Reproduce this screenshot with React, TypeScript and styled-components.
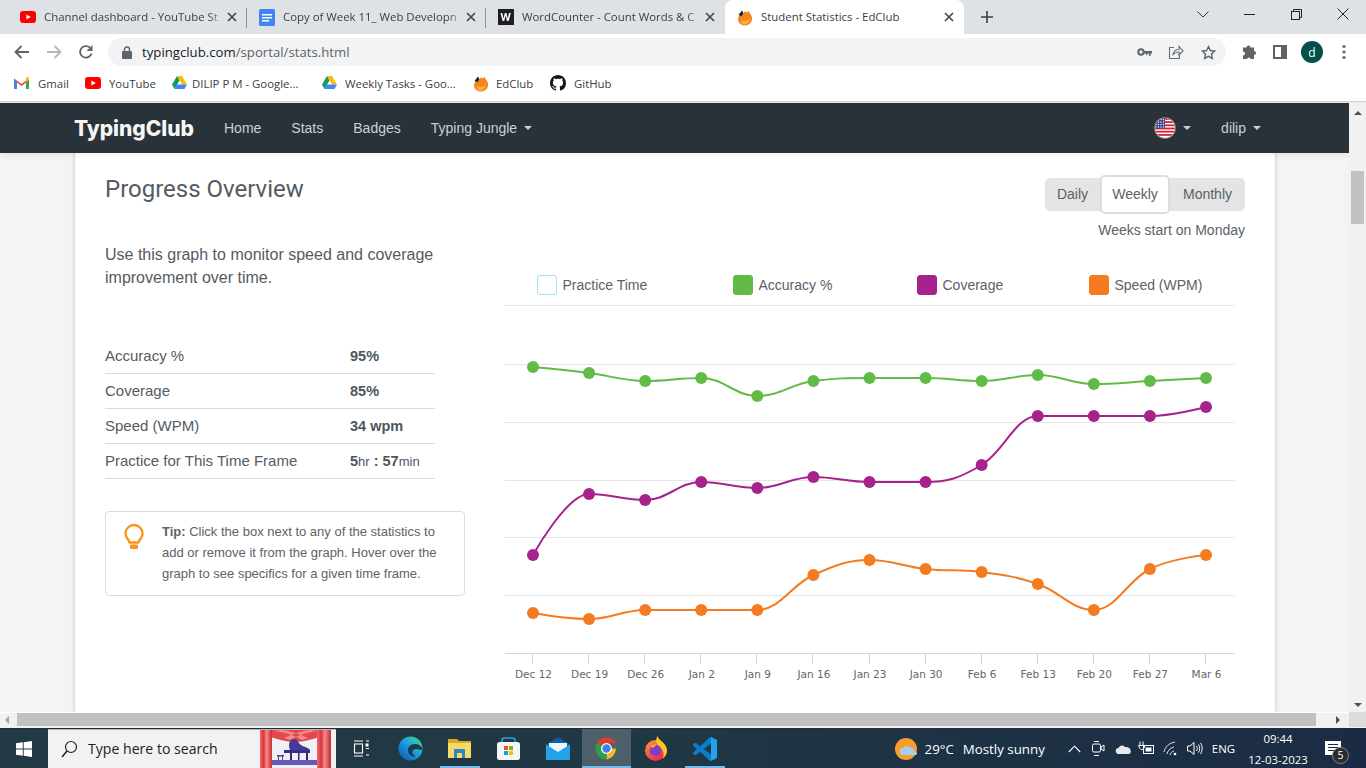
import React from 'react';
import styled, { createGlobalStyle } from 'styled-components';

const Global = createGlobalStyle`
  html, body { margin: 0; padding: 0; width: 1366px; height: 768px; overflow: hidden; background: #fff; }
  * { box-sizing: border-box; }
  #root { width: 1366px; height: 768px; }
`;

const ui = `"Open Sans", "Noto Sans", sans-serif`;
const web = `"Liberation Sans", Arial, sans-serif`;

const Screen = styled.div`
  width: 1366px; height: 768px; display: flex; flex-direction: column; overflow: hidden; font-family: ${web};
`;

/* ---------- browser chrome ---------- */
const TabStrip = styled.div`
  height: 34px; background: #dee1e6; display: flex; align-items: flex-end; padding-left: 8px; flex: none;
`;
const Tab = styled.div<{ $active?: boolean; $divider?: boolean }>`
  width: 239px; height: 34px; display: flex; align-items: center; padding: 0 10px 0 12px;
  background: ${p => (p.$active ? '#fff' : 'transparent')};
  border-radius: ${p => (p.$active ? '8px 8px 0 0' : '0')};
  position: relative;
  &::after {
    content: ''; position: absolute; right: 0; top: 8px; height: 20px; width: 1px;
    background: ${p => (p.$divider ? '#8d9096' : 'transparent')};
  }
`;
const TabFavicon = styled.span`
  width: 16px; height: 17px; display: flex; align-items: center; justify-content: center; flex: none;
`;
const TabTitle = styled.span`
  font: 11.4px ${ui}; color: #3c4043; margin-left: 8px; flex: 1; white-space: nowrap; padding-bottom: 2px;
  -webkit-mask-image: linear-gradient(90deg, #000 90%, transparent 99%);
  mask-image: linear-gradient(90deg, #000 90%, transparent 99%);
`;
const TabTitleActive = styled(TabTitle)`
  -webkit-mask-image: none; mask-image: none;
`;
const NewTab = styled.div`
  width: 24px; height: 34px; margin-left: 11px; display: flex; align-items: center; justify-content: center;
`;
const WindowControls = styled.div`
  margin-left: auto; display: flex; height: 34px; align-items: center;
`;
const WinCtl = styled.div`
  width: 46.5px; height: 34px; display: flex; align-items: center; justify-content: center; padding-bottom: 6px;
`;
const Toolbar = styled.div`
  height: 34px; background: #fff; display: flex; align-items: center; flex: none; padding: 2px 0 0 6px;
`;
const ToolBtn = styled.div`
  width: 32px; height: 28px; display: flex; align-items: center; justify-content: center; flex: none;
`;
const Omnibox = styled.div`
  margin: 0 6px; width: 1118px; height: 28px; background: #f1f3f4; border-radius: 14px; display: flex; align-items: center;
  padding: 0 2px 0 14px;
`;
const Url = styled.span`
  font: 13.2px ${ui}; color: #5f6368; margin-left: 10px; flex: 1;
  b { font-weight: 400; color: #202124; }
`;
const ProfileDot = styled.div`
  width: 22px; height: 22px; border-radius: 50%; background: #02504a; color: #fff; font: 12px ${ui};
  display: flex; align-items: center; justify-content: center;
`;
const Bookmarks = styled.div`
  height: 32px; background: #fff; display: flex; align-items: center; padding: 0 0 2px 14px; flex: none;
`;
const Bookmark = styled.div<{ $w: number }>`
  width: ${p => p.$w}px; display: flex; align-items: center; font: 11.4px ${ui}; color: #3c4043; white-space: nowrap; flex: none;
`;
const MarkIcon = styled.span<{ $w: number }>`
  width: ${p => p.$w}px; display: flex; align-items: center; flex: none;
`;
const ChromeEdge = styled.div`
  height: 3px; flex: none; background: linear-gradient(#fff 0 1px, #d0d2d4 1px 2px, #e6e6e6 2px);
`;

/* ---------- page ---------- */
const Viewport = styled.div`
  flex: 1; display: flex; min-height: 0;
`;
const Page = styled.div`
  flex: 1; display: flex; flex-direction: column; min-width: 0; background: #f4f4f4; overflow: hidden;
`;
const NavBar = styled.nav`
  height: 50px; flex: none; background: #2a3239; display: flex; align-items: center; padding: 0 88px 0 74px;
  color: #ccd0d3; font: 14px ${web}; position: relative; z-index: 2;
  box-shadow: 0 2px 6px rgba(0,0,0,.08);
`;
const Brand = styled.div`
  font: 800 21px Inter, "Open Sans", sans-serif; color: #f4f5f5; letter-spacing: -.05px; margin-right: 30px; width: 120px; white-space: nowrap;
`;
const NavLink = styled.div`
  display: flex; align-items: center; margin-right: 30px; white-space: nowrap;
`;
const NavUser = styled(NavLink)`
  margin-right: 0;
`;
const Caret = styled.i`
  display: inline-block; width: 0; height: 0; border-left: 4px solid transparent; border-right: 4px solid transparent;
  border-top: 4px solid currentColor; margin-left: 7px;
`;
const NavRight = styled.div`
  margin-left: auto; display: flex; align-items: center;
`;
const Lang = styled.div`
  display: flex; align-items: center; margin-right: 30px;
`;
const Card = styled.main`
  margin-left: 74px; width: 1202px; flex: 1; background: #fff; padding: 22px 30px 0 30px;
  border-left: 1px solid #ddd; border-right: 1px solid #ddd; box-shadow: 0 0 4px rgba(0,0,0,.12); overflow: hidden;
`;
const Header = styled.div`
  display: flex; justify-content: space-between; align-items: flex-start; height: 68px;
`;
const Title = styled.h1`
  margin: 0; font: 400 24px/28px Roboto, sans-serif; color: #555b60;
`;
const ToggleWrap = styled.div`
  display: flex; flex-direction: column; align-items: flex-end;
`;
const Toggle = styled.div`
  margin-top: 3px; height: 33px; width: 200px; background: #e4e4e4; border-radius: 5px; display: flex; align-items: center;
`;
const ToggleItem = styled.div<{ $active?: boolean; $w: number }>`
  width: ${p => p.$w}px; text-align: center; font: 14px ${web}; color: #5a6268;
  ${p => p.$active ? 'height: 39px; line-height: 35px; background: #fff; border: 2px solid #ddd; border-radius: 5px;' : 'line-height: 33px;'}
`;
const WeekNote = styled.div`
  font: 14px/17px ${web}; color: #5a6268; margin-top: 11px;
`;
const Body = styled.div`
  display: grid; grid-template-columns: 360px 740px; column-gap: 40px;
`;
const Intro = styled.p`
  margin: 0; font: 16px/23px ${web}; color: #555b60; width: 340px;
`;
const Stats = styled.div`
  width: 330px; margin-top: 50px;
`;
const StatRow = styled.div`
  height: 35px; display: flex; align-items: center; border-bottom: 1px solid #d9dde2; font: 15px ${web}; color: #555b60; padding-bottom: 1px;
`;
const StatName = styled.span`
  width: 245px;
`;
const StatValue = styled.span`
  font: 14.5px ${web}; color: #50565b;
  b { font-weight: 700; }
  small { font-size: 13px; }
`;
const TipBox = styled.div`
  margin-top: 32px; width: 360px; height: 85px; border: 1px solid #dcdcdc; border-radius: 4px; display: flex; padding: 9px 20px 0 18px;
`;
const TipIcon = styled.div`
  width: 38px; flex: none; padding-top: 3px;
`;
const TipText = styled.p`
  margin: 0; font: 13px/21px ${web}; color: #5d6368; white-space: nowrap;
  b { font-weight: 700; }
`;
const Legend = styled.div`
  height: 40px; margin-top: 22px; display: flex; align-items: center; font: 14px ${web}; color: #5a6268;
`;
const LegendItem = styled.div<{ $w: number; $first?: boolean }>`
  width: ${p => p.$w}px; display: flex; align-items: center; white-space: nowrap;
  ${p => (p.$first ? 'margin-left: 32px;' : '')}
`;
const Swatch = styled.span<{ $c: string; $empty?: boolean }>`
  width: 20px; height: 20px; border-radius: 3px; margin-right: 5.5px; flex: none;
  background: ${p => (p.$empty ? '#fff' : p.$c)}; border: 1px solid ${p => p.$c};
`;
const ChartSvg = styled.svg`
  display: block;
`;

/* ---------- scrollbars ---------- */
const VScroll = styled.div`
  width: 17px; flex: none; background: #f1f1f1; display: flex; flex-direction: column; align-items: center;
`;
const Arrow = styled.div<{ $dir: 'up' | 'down' | 'left' | 'right'; $c?: string }>`
  width: 0; height: 0; border: 4px solid transparent; flex: none;
  border-${p => ({ up: 'bottom', down: 'top', left: 'right', right: 'left' }[p.$dir])}-color: ${p => p.$c || '#505050'};
`;
const UpArrow = styled(Arrow)`margin-top: 4px;`;
const DownArrow = styled(Arrow)`margin-top: auto; margin-bottom: 1px;`;
const VThumb = styled.div`
  width: 13px; height: 53px; background: #c1c1c1; margin-top: 56px;
`;
const HScroll = styled.div`
  height: 16px; flex: none; background: #f1f1f1; display: flex; align-items: center; padding-bottom: 2px; border-top: 1px solid #fff;
`;
const HThumb = styled.div`
  width: 1299px; height: 13px; background: #c1c1c1; margin: 0 0 0 8px;
`;
const HLeft = styled(Arrow)`margin-left: 1px; border-right-color: #a0a0a0;`;
const HRight = styled(Arrow)`margin-left: 20px;`;
const HCorner = styled.div`
  width: 17px; height: 15px; margin-left: auto; background: #dcdcdc;
`;

/* ---------- taskbar ---------- */
const Taskbar = styled.div`
  height: 40px; flex: none; display: flex; align-items: center; color: #fff;
  background: linear-gradient(90deg, #213a44 0%, #203844 45%, #1b2b45 100%);
  border-top: 1px solid #1c2f3a;
`;
const StartBtn = styled.div`
  width: 48px; height: 40px; display: flex; align-items: center; justify-content: center;
`;
const SearchBox = styled.div`
  width: 288px; height: 40px; background: #f2f2f2; border: 1px solid #b6b6b6; border-width: 1px 0; display: flex; align-items: center; padding: 0 5px 0 13px;
  color: #222; font: 14.1px ${ui}; overflow: hidden;
`;
const SearchLabel = styled.span`
  margin-left: 10px; flex: 1; white-space: nowrap;
`;
const TaskCell = styled.div<{ $active?: boolean; $w?: number }>`
  width: ${p => p.$w || 49}px; height: 39px; display: flex; align-items: center; justify-content: center; flex: none; position: relative;
  background: ${p => (p.$active ? '#4d5f68' : 'transparent')};
`;
const OpenMark = styled.span<{ $wide?: boolean }>`
  position: absolute; bottom: 0; height: 2px; background: #76b9ed; left: ${p => (p.$wide ? '0' : '5px')}; right: ${p => (p.$wide ? '0' : '4px')};
`;
const Tray = styled.div`
  margin-left: auto; display: flex; align-items: center; height: 40px; font: 13.3px ${ui};
`;
const Weather = styled.div`
  display: flex; align-items: center; gap: 8px; margin-right: 21px; white-space: nowrap;
`;
const WeatherLabel = styled.span`
  margin-left: 1px;
`;
const TrayIcons = styled.div`
  display: flex; align-items: center; gap: 6px; margin-right: 8px;
`;
const TrayIcon = styled.div`
  width: 18px; display: flex; justify-content: center;
`;
const TrayText = styled.span`
  font: 11.4px ${ui}; margin-right: 13px;
`;
const Clock = styled.div`
  text-align: center; font: 11.4px/21px ${ui}; width: 60px;
`;
const Notify = styled.div`
  width: 58px; display: flex; justify-content: center; position: relative; height: 40px; padding: 12px 8px 0 0;
`;
const Badge = styled.span`
  position: absolute; left: 24px; top: 18px; width: 17px; height: 17px; border-radius: 50%; background: #2b2b2b; border: 1px solid #888;
  font: 10.5px/15px ${ui}; text-align: center; color: #fff;
`;

/* ---------- icons ---------- */
const YT = () => (
  <svg width="16" height="16" viewBox="0 0 16 16"><rect y="2" width="16" height="12" rx="3" fill="#f00" /><path d="M6.4 5.4 10.8 8l-4.4 2.6z" fill="#fff" /></svg>
);
const Docs = () => (
  <svg width="16" height="17" viewBox="0 0 16 17"><rect width="16" height="17" rx="1.500" fill="#4285f4" /><path d="M3 5h10v1.500H3zM3 8h10v1.500H3zM3 11h7v1.500H3z" fill="#fff" /></svg>
);
const WIcon = () => (
  <svg width="16" height="16" viewBox="0 0 16 16"><rect width="16" height="16" fill="#1f1f1f" /><path d="M2.500 4h1.800l1.100 5.600L6.900 4h1.500l1.400 5.600L11 4h1.800l-2.100 8H9L7.600 6.600 6.200 12H4.600z" fill="#fff" /></svg>
);
const Ed = () => (
  <svg width="16" height="17" viewBox="0 0 16 17"><path d="M8 2c1 2 2.500 1.500 4-.8-.2 1.500.2 2.300 1 3.300 1.600 2 2.400 3.800 2 6-.5 3.600-3.400 6-7 6-3.800 0-7-2.600-7-6.300 0-1.500.5-2.800 1.500-3.800C3.600 7.500 6 6 8 2z" fill="#f5861f" /><path d="M1.500 6 5 1.500l1.500 2.800-2 3z" fill="#222" /><path d="M4 11c2.500 1.800 6.500 1.500 9-2-.6 4-3 6.500-5.500 6.500S4 13.500 4 11z" fill="#fbb040" /></svg>
);
const Drive = () => (
  <svg width="15" height="14" viewBox="0 0 15 14"><path d="M5 0h5l5 8.600h-5z" fill="#fbbc04" /><path d="M5 0 0 8.600 2.500 13l5-8.500z" fill="#0f9d58" /><path d="M5 8.600h10L12.500 13h-10z" fill="#4285f4" /></svg>
);
const Gmail = () => (
  <svg width="15" height="12" viewBox="0 0 15 12"><path d="M0 1.500 7.500 7 15 1.500V11a1 1 0 0 1-1 1h-2V5.500L7.500 9 3 5.500V12H1a1 1 0 0 1-1-1z" fill="#ea4335" /><path d="M0 3v8a1 1 0 0 0 1 1h2V5z" fill="#4285f4" /><path d="M12 5v7h2a1 1 0 0 0 1-1V3z" fill="#34a853" /><path d="M12 1v4l3-2V1.500C15 .3 13.500-.3 12.700.3z" fill="#fbbc04" /></svg>
);
const Github = () => (
  <svg width="16" height="16" viewBox="0 0 16 16"><path fill="#181717" d="M8 0C3.580 0 0 3.580 0 8c0 3.540 2.290 6.530 5.470 7.590.4.070.55-.17.55-.38 0-.19-.01-.82-.01-1.490-2.010.37-2.530-.49-2.690-.94-.09-.23-.48-.94-.82-1.130-.28-.15-.68-.52-.01-.53.63-.01 1.080.58 1.230.82.720 1.210 1.870.870 2.330.660.070-.520.280-.870.510-1.070-1.780-.2-3.640-.89-3.640-3.950 0-.87.310-1.590.820-2.150-.08-.2-.36-1.020.08-2.120 0 0 .67-.21 2.200.820.640-.18 1.320-.27 2-.27s1.360.09 2 .27c1.530-1.040 2.200-.82 2.200-.82.440 1.100.160 1.920.080 2.120.510.560.820 1.270.820 2.150 0 3.070-1.870 3.750-3.650 3.950.290.250.540.730.540 1.480 0 1.070-.01 1.930-.01 2.200 0 .210.150.460.550.380A8.010 8.010 0 0 0 16 8c0-4.420-3.580-8-8-8z" /></svg>
);
const CloseX = () => (
  <svg width="10" height="10" viewBox="0 0 10 10"><path d="M1 1l8 8M9 1l-8 8" stroke="#45484c" strokeWidth="1.700" /></svg>
);
const Plus = () => (
  <svg width="12" height="12" viewBox="0 0 12 12"><path d="M6 0v12M0 6h12" stroke="#3c4043" strokeWidth="1.600" /></svg>
);
const Back = () => (
  <svg width="16" height="14" viewBox="0 0 16 14"><path d="M15 7H2M7.500 1 1.500 7l6 6" fill="none" stroke="#5f6368" strokeWidth="1.800" /></svg>
);
const Fwd = () => (
  <svg width="16" height="14" viewBox="0 0 16 14"><path d="M1 7h13M8.500 1l6 6-6 6" fill="none" stroke="#b4b6b9" strokeWidth="1.800" /></svg>
);
const Reload = () => (
  <svg width="16" height="16" viewBox="0 0 16 16"><path d="M13.500 9.500A5.800 5.800 0 1 1 12 3.700" fill="none" stroke="#5f6368" strokeWidth="1.800" /><path d="M14.500 1v6h-6z" fill="#5f6368" /></svg>
);
const Lock = () => (
  <svg width="10" height="13" viewBox="0 0 10 13"><path d="M2.500 5V3.500a2.500 2.500 0 0 1 5 0V5" fill="none" stroke="#5f6368" strokeWidth="1.400" /><rect y="5" width="10" height="8" rx="1" fill="#5f6368" /></svg>
);
const KeyIcon = () => (
  <svg width="15" height="9" viewBox="0 0 15 9"><circle cx="4" cy="4" r="2.700" fill="none" stroke="#5f6368" strokeWidth="2" /><path d="M7 3h8v2.500h-1.500V8H12V5.500h-1.500V7H9V5.500H7z" fill="#5f6368" /></svg>
);
const ShareIcon = () => (
  <svg width="16" height="16" viewBox="0 0 16 16" fill="none" stroke="#6a6e72" strokeWidth="1.100"><path d="M6 3.500H1.500v11h10V10" /><path d="M5 10.500c.5-3 3-5 6-5V2.500l4 4.500-4 4V8c-2.500 0-4.500 1-6 2.500z" /></svg>
);
const StarIcon = () => (
  <svg width="15" height="15" viewBox="0 0 24 24" fill="none" stroke="#5f6368" strokeWidth="2.200"><path d="m12 2.500 3 6.300 6.900.9-5 4.800 1.200 6.900-6.100-3.300-6.100 3.300 1.200-6.900-5-4.800 6.900-.9z" /></svg>
);
const Puzzle = () => (
  <svg width="15" height="15" viewBox="0 0 15 15"><path d="M5.500 2.500a2 2 0 0 1 4 0H13v3.500a2 2 0 0 1 0 4V14H9.800a2 2 0 0 0-3.900 0H2v-3.500a2 2 0 0 0 0-4V2.500z" fill="#5f6368" /></svg>
);
const SidePanel = () => (
  <svg width="14" height="14" viewBox="0 0 14 14"><rect x="1" y="1" width="12" height="12" fill="none" stroke="#5f6368" strokeWidth="2" /><rect x="8" y="1" width="5" height="12" fill="#5f6368" /></svg>
);
const Dots = () => (
  <svg width="4" height="16" viewBox="0 0 4 16"><circle cx="2" cy="2.500" r="1.600" fill="#5f6368" /><circle cx="2" cy="8" r="1.600" fill="#5f6368" /><circle cx="2" cy="13.500" r="1.600" fill="#5f6368" /></svg>
);
const Flag = () => (
  <svg width="22" height="22" viewBox="0 0 22 22">
    <defs><clipPath id="fc"><circle cx="11" cy="11" r="10" /></clipPath></defs>
    <circle cx="11" cy="11" r="10.800" fill="#8a8f96" />
    <g clipPath="url(#fc)">
      <rect width="22" height="22" fill="#fff" />
      {[1, 4.2, 7.4, 10.6, 13.8, 17].map(y => <rect key={y} y={y} width="22" height="1.800" fill="#d8232f" />)}
      <rect width="11" height="11.500" fill="#3b3f8f" />
      {[2.5, 5, 7.5, 10].map(y => [2, 4.5, 7, 9.5].map(x => <circle key={`${x}-${y}`} cx={x} cy={y} r=".7" fill="#fff" />))}
    </g>
  </svg>
);
const Bulb = () => (
  <svg width="20" height="27" viewBox="0 0 20 27"><path d="M5.500 18.500c-.3-2-1.400-3.300-2.600-4.800A8.300 8.300 0 0 1 1.500 9.500a8.500 8.500 0 0 1 17 0c0 1.600-.4 3-1.400 4.200-1.200 1.500-2.300 2.800-2.600 4.800z" fill="none" stroke="#f7941d" strokeWidth="2.400" strokeLinejoin="round" /><rect x="6" y="20.500" width="8" height="4.500" rx="1" fill="#f7941d" /></svg>
);
const WinLogo = () => (
  <svg width="16" height="16" viewBox="0 0 16 16"><path fill="#fff" d="M0 2.300 6.800 1.300v6.300H0zM7.700 1.200 16 0v7.600H7.700zM0 8.400h6.800v6.300L0 13.700zM7.700 8.400H16V16l-8.300-1.200z" /></svg>
);
const SearchGlass = () => (
  <svg width="17" height="18" viewBox="0 0 17 18"><circle cx="10" cy="7" r="5.500" fill="none" stroke="#222" strokeWidth="1.200" /><path d="M6 11 1 17" stroke="#222" strokeWidth="1.500" /></svg>
);
const Piano = () => (
  <svg width="71" height="38" viewBox="0 0 71 38" style={{ flex: 'none' }}>
    <defs>
      <linearGradient id="cur" x1="0" x2="1" y1="0" y2="0">
        <stop offset="0" stopColor="#f0686a" /><stop offset=".3" stopColor="#d8383c" /><stop offset=".55" stopColor="#f58a8a" /><stop offset="1" stopColor="#c72a30" />
      </linearGradient>
    </defs>
    <rect width="71" height="38" fill="#f1f0f5" />
    <path d="M10 0h50v7c-8 2-16 5-25 5S18 9 10 7z" fill="#e2484c" />
    <path d="M14 1c10 1 20 4 28 9l6-2C40 4 30 1 22 0zM58 1c-10 1-20 4-28 9l-6-2c8-4 18-7 26-8z" fill="#f58a8a" />
    <rect x="12" y="30" width="46" height="5" fill="#6c58b4" />
    <path d="M30 20c-2-5-1-11 4-11 4 0 4 4 7 6 3 2 7 2 9 5z" fill="#463a96" />
    <rect x="24" y="20" width="26" height="3" fill="#3a2e86" />
    <path d="M30 23h2v7h-2zM46 23h2v7h-2zM38 23h1.500v7H38z" fill="#32287a" />
    <rect x="17" y="25" width="7" height="1.500" fill="#4f3f9a" />
    <rect x="18" y="26" width="1" height="4" fill="#4f3f9a" /><rect x="22" y="26" width="1" height="4" fill="#4f3f9a" />
    <rect x="0" width="12" height="38" fill="url(#cur)" />
    <rect x="57" width="14" height="38" fill="url(#cur)" />
  </svg>
);
const TaskView = () => (
  <svg width="17" height="17" viewBox="0 0 17 17" fill="none" stroke="#fff" strokeWidth="1.100"><path d="M1 1h9M1 16h9" /><rect x="1.500" y="4" width="8" height="9" /><path d="M13 8.500h3M13 15h3M13 1h3" /><rect x="12.500" y="3.500" width="3" height="3" fill="#fff" stroke="none" /></svg>
);
const Edge = () => (
  <svg width="25" height="25" viewBox="0 0 25 25">
    <defs>
      <linearGradient id="eg" x1="0" y1="1" x2=".9" y2="0"><stop offset="0" stopColor="#0b52a8" /><stop offset=".55" stopColor="#1b9de2" /><stop offset="1" stopColor="#47d68b" /></linearGradient>
    </defs>
    <circle cx="12.500" cy="12.500" r="12" fill="url(#eg)" />
    <path d="M24.500 14c-.2-3.500-3.500-6-7.500-6-4.500 0-7.500 3-7 7 .5 3.800 4 6.300 8 5.500-2.200-.7-3.800-2.500-3.600-4.500.2-1.800 1.700-3 3.600-3 2.200 0 3.800 1 6.500 1z" fill="#1e3a48" />
  </svg>
);
const Folder = () => (
  <svg width="23" height="19" viewBox="0 0 23 19"><path d="M0 0h9l2 2h12v17H0z" fill="#e0a526" /><path d="M0 4h23v15H0z" fill="#f7d967" /><path d="M6 10h11v9h-3v-5H9v5H6z" fill="#2e86c9" /></svg>
);
const Store = () => (
  <svg width="23" height="23" viewBox="0 0 23 23"><path d="M5 7V3.500C5 1.500 6 1 7.500 1h8c1.500 0 2.500.5 2.500 2.500V7" fill="none" stroke="#2aa0da" strokeWidth="1.700" /><rect y="5" width="23" height="18" rx="2.500" fill="#f5f5f5" /><rect x="7" y="9" width="4" height="4" fill="#f25022" /><rect x="12" y="9" width="4" height="4" fill="#7fba00" /><rect x="7" y="14" width="4" height="4" fill="#00a4ef" /><rect x="12" y="14" width="4" height="4" fill="#ffb900" /></svg>
);
const Mail = () => (
  <svg width="24" height="23" viewBox="0 0 24 23"><path d="M12 0 24 7.500V23H0V7.500z" fill="#0d5fa8" /><path d="M3 6h18v9H3z" fill="#eef6fb" /><path d="M0 7.500 12 15 24 7.500V23H0z" fill="#23a2e6" /></svg>
);
const ChromeIcon = () => (
  <svg width="25" height="25" viewBox="0 0 48 48">
    <path d="M24 24 5.800 13.500A21 21 0 0 1 42.200 13.500H24z" fill="#e33b2e" />
    <path d="M24 24H42.200A21 21 0 0 1 24 45z" fill="#f3be2a" />
    <path d="M24 24 24 45A21 21 0 0 1 5.800 13.500z" fill="#2f9e4a" />
    <circle cx="24" cy="24" r="10.500" fill="#fff" /><circle cx="24" cy="24" r="8" fill="#3f7fe8" />
  </svg>
);
const Firefox = () => (
  <svg width="23" height="25" viewBox="0 0 24 26">
    <defs><linearGradient id="ff" x1="0" x2=".6" y1="0" y2="1"><stop offset="0" stopColor="#ff9a2a" /><stop offset="1" stopColor="#f0295c" /></linearGradient></defs>
    <circle cx="12" cy="15" r="11" fill="url(#ff)" />
    <path d="M14 0c1 3 3 4 5 6 3 2.500 5 5.500 5 9 0 4-2 7-5 9 2-3 2-7 0-10-2-2.500-5-3.500-6-7-.4-2-.2-5 1-7z" fill="#ffc626" />
    <circle cx="12" cy="15" r="6" fill="#7b3fc0" />
    <path d="M7 11c1.500-2 4-2.500 6-2l-3 3c-1.500.5-2.500 0-3-1z" fill="#ffb21f" />
  </svg>
);
const VSCode = () => (
  <svg width="24" height="24" viewBox="0 0 24 24"><path fill="#0a7ccb" d="M23.150 2.587 18.210.21a1.494 1.494 0 0 0-1.705.29l-9.460 8.630-4.120-3.128a.999.999 0 0 0-1.276.057L.327 7.261A1 1 0 0 0 .326 8.740L3.899 12 .326 15.260a1 1 0 0 0 .001 1.479L1.650 17.940a.999.999 0 0 0 1.276.057l4.120-3.128 9.460 8.630a1.492 1.492 0 0 0 1.704.29l4.942-2.377A1.500 1.500 0 0 0 24 20.060V3.939a1.500 1.500 0 0 0-.85-1.352zm-5.146 14.861L10.826 12l7.178-5.448v10.896z" /><path fill="#23a3ee" d="M18 0c.1.050.2.100.210.210l4.940 2.377A1.500 1.500 0 0 1 24 3.939V20.060a1.500 1.500 0 0 1-.85 1.352l-4.940 2.377c-.1.050-.2.100-.21.110V17.450V6.550z" /></svg>
);
const WeatherIcon = () => (
  <svg width="22" height="26" viewBox="0 0 22 26"><circle cx="11" cy="13" r="11" fill="#f6a02b" /><path d="M8 19a3.500 3.500 0 0 1 .5-7c.8-2 4-2.800 5.600-.6 2.800-.8 5 1 5 3.600 1.900.3 2.900 1.400 2.900 2.400 0 1-.8 1.600-2 1.600z" fill="#a9cdeb" /></svg>
);
const UpChevron = () => (
  <svg width="13" height="8" viewBox="0 0 13 8"><path d="M.8 7 6.500 1.200 12.200 7" fill="none" stroke="#fff" strokeWidth="1.100" /></svg>
);
const Meet = () => (
  <svg width="13" height="19" viewBox="0 0 13 19" fill="none" stroke="#fff" strokeWidth="1"><rect x=".5" y="5" width="8" height="8" rx="1.500" /><path d="m9 8 3-2v6l-3-2zM2 2.500h5M2 16.500h5" /></svg>
);
const Cloud = () => (
  <svg width="16" height="10" viewBox="0 0 16 10"><path d="M4 10a3 3 0 0 1-.5-6C4.500 1 8.500.5 10 3c3-.5 5.500 1 5.800 4 .2 1.800-1 3-2.800 3z" fill="#e8e8e8" /></svg>
);
const Battery = () => (
  <svg width="17" height="15" viewBox="0 0 17 15" fill="none" stroke="#fff"><path d="M2 .5v4M5 .5v4M.5 4.500h6v2l-2 2H3l-1-1z" strokeWidth="1" /><rect x="5.500" y="4.500" width="10" height="8" strokeWidth="1" /><rect x="7.500" y="6.500" width="6" height="4" fill="#fff" stroke="none" /></svg>
);
const Wifi = () => (
  <svg width="16" height="15" viewBox="0 0 16 15" fill="none" stroke="#dfe5ea" strokeWidth="1"><path d="M1 11C2 6 6 2 12 1M4 13c.5-3 3-6 7-7M7 14c.4-2 2-3.500 4-4" /><circle cx="12" cy="13" r="1.300" fill="#fff" stroke="none" /></svg>
);
const Volume = () => (
  <svg width="16" height="15" viewBox="0 0 16 15" fill="none" stroke="#fff" strokeWidth="1"><path d="M.5 5h2.500L7 1.500v12L3 10H.5z" /><path d="M9.500 5c1 1.500 1 3.500 0 5M11.500 3.500c1.600 2.500 1.600 5.500 0 8M13.500 2c2.200 3.500 2.200 7.500 0 11" /></svg>
);
const NoteIcon = () => (
  <svg width="16" height="14" viewBox="0 0 16 14"><path d="M0 0h16v14H0z" fill="#fff" /><path d="M3 3.500h10M3 6.500h10M3 9.500h7" stroke="#1b2b45" /></svg>
);

/* ---------- chart ---------- */
const X0 = 505, Y0 = 305;
const px = (i: number) => 533 + (i * 673) / 12 - X0;
const labels = ['Dec 12', 'Dec 19', 'Dec 26', 'Jan 2', 'Jan 9', 'Jan 16', 'Jan 23', 'Jan 30', 'Feb 6', 'Feb 13', 'Feb 20', 'Feb 27', 'Mar 6'];
const series = [
  { c: '#f47b20', y: [613, 619, 610, 610, 610, 575, 560, 569, 572, 584, 610, 569, 555] },
  { c: '#a6228c', y: [555, 494, 500, 482, 488, 477, 482, 482, 465, 416, 416, 416, 407] },
  { c: '#62bb46', y: [367, 373, 381, 378, 396, 381, 378, 378, 381, 375, 384, 381, 378] },
];

function splinePath(ys: number[]): string {
  const pts = ys.map((y, i) => ({ x: px(i), y: y - Y0 }));
  const ctrl = pts.map((p, i) => {
    const last = pts[i - 1], next = pts[i + 1];
    if (!last || !next) return { lx: p.x, ly: p.y, rx: p.x, ry: p.y };
    const s = 1.5, d = s + 1;
    const lx = (s * p.x + last.x) / d, rx = (s * p.x + next.x) / d;
    let ly = (s * p.y + last.y) / d, ry = (s * p.y + next.y) / d;
    const cor = ((ry - ly) * (rx - p.x)) / (rx - lx) + p.y - ry;
    ly += cor; ry += cor;
    if (ly > last.y && ly > p.y) { ly = Math.max(last.y, p.y); ry = 2 * p.y - ly; }
    else if (ly < last.y && ly < p.y) { ly = Math.min(last.y, p.y); ry = 2 * p.y - ly; }
    if (ry > next.y && ry > p.y) { ry = Math.max(next.y, p.y); ly = 2 * p.y - ry; }
    else if (ry < next.y && ry < p.y) { ry = Math.min(next.y, p.y); ly = 2 * p.y - ry; }
    return { lx, ly, rx, ry };
  });
  let d = `M${pts[0].x} ${pts[0].y}`;
  for (let i = 1; i < pts.length; i++) {
    d += ` C${ctrl[i - 1].rx} ${ctrl[i - 1].ry} ${ctrl[i].lx} ${ctrl[i].ly} ${pts[i].x} ${pts[i].y}`;
  }
  return d;
}

const Chart = () => (
  <ChartSvg width={730} height={385} viewBox="0 0 730 385">
    {[305.5, 364.5, 422.5, 480.5, 537.5, 595.5].map(y => (
      <line key={y} x1={0} x2={730} y1={y - Y0} y2={y - Y0} stroke="#e6e6e6" />
    ))}
    <line x1={0} x2={730} y1={348.5} y2={348.5} stroke="#ccd6eb" />
    {labels.map((l, i) => (
      <g key={l}>
        <line x1={Math.round(px(i)) - 0.5} x2={Math.round(px(i)) - 0.5} y1={349} y2={359} stroke="#ccd6eb" />
        <text x={px(i) + 0.5} y={373} textAnchor="middle" fontFamily="'DejaVu Sans', sans-serif" fontSize="10.5" fill="#666">{l}</text>
      </g>
    ))}
    {series.map(s => (
      <g key={s.c}>
        <path d={splinePath(s.y)} fill="none" stroke={s.c} strokeWidth={2} />
        {s.y.map((y, i) => <circle key={i} cx={px(i)} cy={y - Y0} r={6} fill={s.c} />)}
      </g>
    ))}
  </ChartSvg>
);

const tabs = [
  { icon: <YT />, title: 'Channel dashboard - YouTube St', divider: true },
  { icon: <Docs />, title: 'Copy of Week 11_ Web Developn', divider: true },
  { icon: <WIcon />, title: 'WordCounter - Count Words & C', divider: false },
];
const marks = [
  { icon: <Gmail />, t: 'Gmail', iw: 24, w: 71 },
  { icon: <YT />, t: 'YouTube', iw: 24, w: 87 },
  { icon: <Drive />, t: 'DILIP P M - Google...', iw: 20, w: 150 },
  { icon: <Drive />, t: 'Weekly Tasks - Goo...', iw: 23, w: 151 },
  { icon: <Ed />, t: 'EdClub', iw: 23, w: 77 },
  { icon: <Github />, t: 'GitHub', iw: 24, w: 70 },
];
const stats: [string, React.ReactNode][] = [
  ['Accuracy %', <b>95%</b>],
  ['Coverage', <b>85%</b>],
  ['Speed (WPM)', <b>34 wpm</b>],
  ['Practice for This Time Frame', <><b>5</b><small>hr</small> <b>:</b> <b>57</b><small>min</small></>],
];
const legend = [
  { t: 'Practice Time', c: '#9fe3fb', empty: true, w: 196 },
  { t: 'Accuracy %', c: '#62bb46', w: 184 },
  { t: 'Coverage', c: '#a6228c', w: 172 },
  { t: 'Speed (WPM)', c: '#f47b20', w: 130 },
];

export default function App() {
  return (
    <Screen>
      <Global />
      <TabStrip>
        {tabs.map(t => (
          <Tab key={t.title} $divider={t.divider}>
            <TabFavicon>{t.icon}</TabFavicon>
            <TabTitle>{t.title}</TabTitle>
            <CloseX />
          </Tab>
        ))}
        <Tab $active>
          <TabFavicon><Ed /></TabFavicon>
          <TabTitleActive>Student Statistics - EdClub</TabTitleActive>
          <CloseX />
        </Tab>
        <NewTab><Plus /></NewTab>
        <WindowControls>
          <WinCtl>
            <svg width="12" height="7" viewBox="0 0 12 7"><path d="M.5.5 6 6 11.500.5" fill="none" stroke="#333" /></svg>
          </WinCtl>
          <WinCtl>
            <svg width="11" height="1" viewBox="0 0 11 1"><rect width="11" height="1" fill="#222" /></svg>
          </WinCtl>
          <WinCtl>
            <svg width="11" height="11" viewBox="0 0 11 11" fill="none" stroke="#222"><rect x=".5" y="2.500" width="8" height="8" /><path d="M2.500 2.500v-2h8v8h-2" /></svg>
          </WinCtl>
          <WinCtl>
            <svg width="12" height="12" viewBox="0 0 12 12"><path d="M.5.500l11 11M11.500.500l-11 11" stroke="#222" /></svg>
          </WinCtl>
        </WindowControls>
      </TabStrip>
      <Toolbar>
        <ToolBtn><Back /></ToolBtn>
        <ToolBtn><Fwd /></ToolBtn>
        <ToolBtn><Reload /></ToolBtn>
        <Omnibox>
          <Lock />
          <Url><b>typingclub.com</b>/sportal/stats.html</Url>
          <ToolBtn><KeyIcon /></ToolBtn>
          <ToolBtn><ShareIcon /></ToolBtn>
          <ToolBtn><StarIcon /></ToolBtn>
        </Omnibox>
        <ToolBtn><Puzzle /></ToolBtn>
        <ToolBtn><SidePanel /></ToolBtn>
        <ToolBtn><ProfileDot>d</ProfileDot></ToolBtn>
        <ToolBtn><Dots /></ToolBtn>
      </Toolbar>
      <Bookmarks>
        {marks.map(m => <Bookmark key={m.t} $w={m.w}><MarkIcon $w={m.iw}>{m.icon}</MarkIcon>{m.t}</Bookmark>)}
      </Bookmarks>
      <ChromeEdge />
      <Viewport>
        <Page>
          <NavBar>
            <Brand>TypingClub</Brand>
            <NavLink>Home</NavLink>
            <NavLink>Stats</NavLink>
            <NavLink>Badges</NavLink>
            <NavLink>Typing Jungle<Caret /></NavLink>
            <NavRight>
              <Lang><Flag /><Caret /></Lang>
              <NavUser>dilip<Caret /></NavUser>
            </NavRight>
          </NavBar>
          <Card>
            <Header>
              <Title>Progress Overview</Title>
              <ToggleWrap>
                <Toggle>
                  <ToggleItem $w={55}>Daily</ToggleItem>
                  <ToggleItem $w={70} $active>Weekly</ToggleItem>
                  <ToggleItem $w={75}>Monthly</ToggleItem>
                </Toggle>
                <WeekNote>Weeks start on Monday</WeekNote>
              </ToggleWrap>
            </Header>
            <Body>
              <div>
                <Intro>Use this graph to monitor speed and coverage improvement over time.</Intro>
                <Stats>
                  {stats.map(([n, v]) => (
                    <StatRow key={n}><StatName>{n}</StatName><StatValue>{v}</StatValue></StatRow>
                  ))}
                </Stats>
                <TipBox>
                  <TipIcon><Bulb /></TipIcon>
                  <TipText>
                    <b>Tip:</b> Click the box next to any of the statistics to<br />
                    add or remove it from the graph. Hover over the<br />
                    graph to see specifics for a given time frame.
                  </TipText>
                </TipBox>
              </div>
              <div>
                <Legend>
                  {legend.map((l, i) => (
                    <LegendItem key={l.t} $w={l.w} $first={i === 0}>
                      <Swatch $c={l.c} $empty={l.empty} />{l.t}
                    </LegendItem>
                  ))}
                </Legend>
                <Chart />
              </div>
            </Body>
          </Card>
        </Page>
        <VScroll>
          <UpArrow $dir="up" />
          <VThumb />
          <DownArrow $dir="down" />
        </VScroll>
      </Viewport>
      <HScroll>
        <HLeft $dir="left" />
        <HThumb />
        <HRight $dir="right" />
        <HCorner />
      </HScroll>
      <Taskbar>
        <StartBtn><WinLogo /></StartBtn>
        <SearchBox>
          <SearchGlass />
          <SearchLabel>Type here to search</SearchLabel>
          <Piano />
        </SearchBox>
        <TaskCell $w={50}><TaskView /></TaskCell>
        <TaskCell><Edge /></TaskCell>
        <TaskCell><Folder /><OpenMark /></TaskCell>
        <TaskCell><Store /></TaskCell>
        <TaskCell><Mail /></TaskCell>
        <TaskCell $active><ChromeIcon /><OpenMark $wide /></TaskCell>
        <TaskCell><Firefox /></TaskCell>
        <TaskCell><VSCode /><OpenMark /></TaskCell>
        <Tray>
          <Weather><WeatherIcon /><span>29°C</span><WeatherLabel>Mostly sunny</WeatherLabel></Weather>
          <TrayIcons>
            <TrayIcon><UpChevron /></TrayIcon>
            <TrayIcon><Meet /></TrayIcon>
            <TrayIcon><Cloud /></TrayIcon>
            <TrayIcon><Battery /></TrayIcon>
            <TrayIcon><Wifi /></TrayIcon>
            <TrayIcon><Volume /></TrayIcon>
          </TrayIcons>
          <TrayText>ENG</TrayText>
          <Clock>09:44<br />12-03-2023</Clock>
          <Notify><NoteIcon /><Badge>5</Badge></Notify>
        </Tray>
      </Taskbar>
    </Screen>
  );
}
